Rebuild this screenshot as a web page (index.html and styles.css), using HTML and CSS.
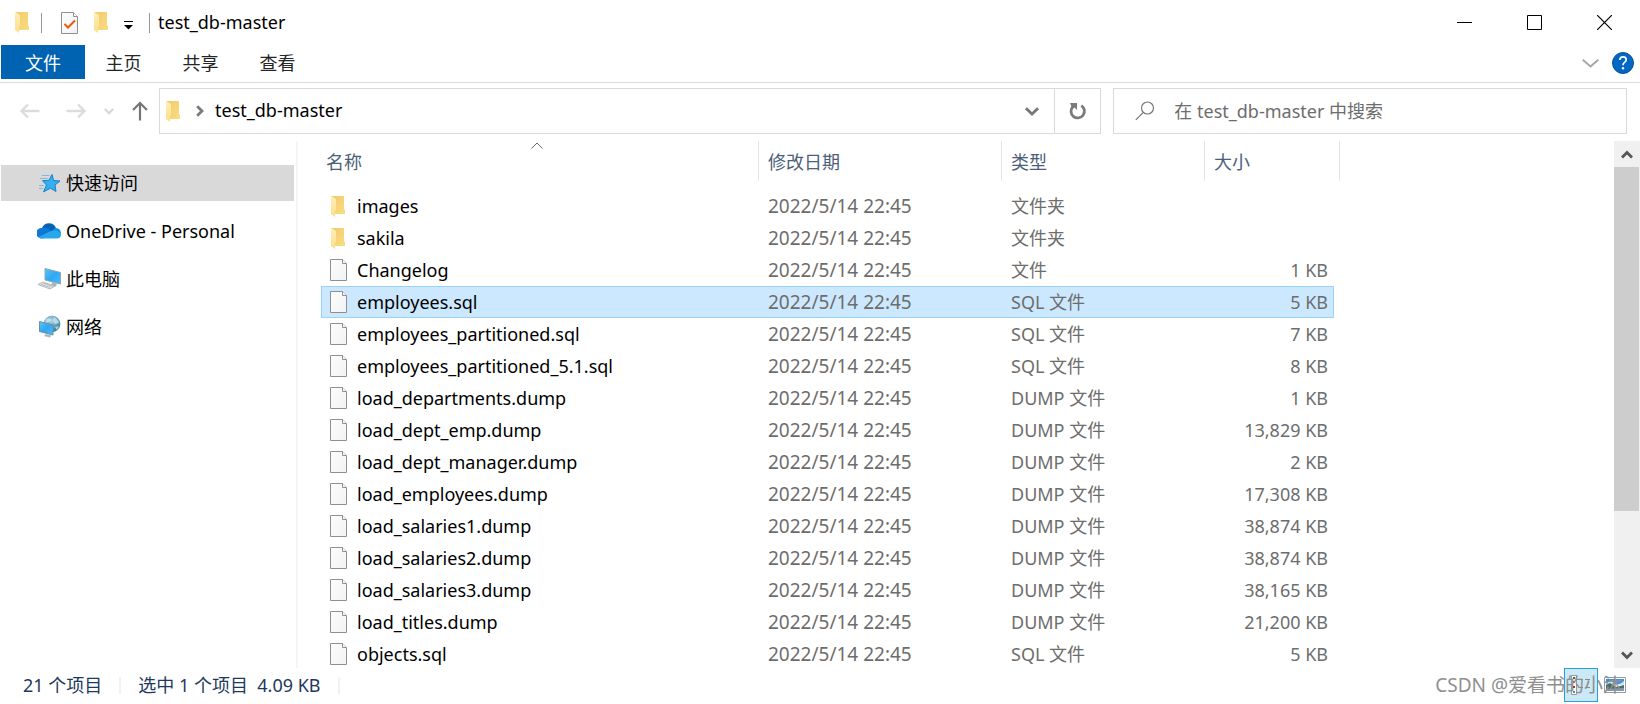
FILE: index.html
```html
<!DOCTYPE html>
<html lang="zh-CN">
<head>
<meta charset="utf-8">
<title>test_db-master</title>
<link rel="stylesheet" href="styles.css">
</head>
<body>
<svg class="defs" aria-hidden="true">
  <defs>
    <linearGradient id="folder-back" x1="0" x2="1" y1="0" y2="1"><stop offset="0" stop-color="#f0cb6c"/><stop offset="1" stop-color="#fbdc82"/></linearGradient>
    <linearGradient id="folder-front" x1="0" x2="0" y1="0" y2="1"><stop offset="0" stop-color="#ffeeb5"/><stop offset="1" stop-color="#fddf8d"/></linearGradient>
    <linearGradient id="page" x1="0" x2="1" y1="0" y2="1"><stop offset="0" stop-color="#fdfdfd"/><stop offset="1" stop-color="#f0f2f4"/></linearGradient>
    <linearGradient id="screen" x1="0" x2="1" y1="0" y2="1"><stop offset="0" stop-color="#5cc4fa"/><stop offset="0.5" stop-color="#2ea8f2"/><stop offset="1" stop-color="#4dbcff"/></linearGradient>
    <radialGradient id="globe" cx="0.45" cy="0.3" r="0.8"><stop offset="0" stop-color="#b5d9e8"/><stop offset="0.5" stop-color="#5d9dbb"/><stop offset="1" stop-color="#2b6c90"/></radialGradient>
    <symbol id="folder" viewBox="0 0 14 21"><path d="M1 0H13V13L14 14V18H4L1 16Z" fill="url(#folder-back)"/><path d="M0 0L5 3V14L4 15V21L0 18Z" fill="url(#folder-front)"/></symbol>
    <symbol id="file" viewBox="0 0 17 22"><path d="M.5 .5H12.500L16.500 4.500V21.500H.5Z" fill="url(#page)" stroke="#8f8f8f"/><path d="M12.500 .5V4.500H16.500" fill="#fff" stroke="#8f8f8f"/></symbol>
  </defs>
</svg>
<div class="window">
  <header class="titlebar">
    <svg class="folder"><use href="#folder"/></svg>
    <span class="title-sep"></span>
    <div class="quick">
      <button class="bare" aria-label="属性"><svg width="17" height="22"><use href="#file"/><path d="M3.500 12L7 15.500L14 8.500" fill="none" stroke="#e8590c" stroke-width="2"/></svg></button>
      <button class="bare" aria-label="新建文件夹"><svg class="folder"><use href="#folder"/></svg></button>
      <button class="bare customize" aria-label="自定义快速访问工具栏"><svg width="10" height="9"><path d="M0 .5H9" stroke="#000"/><path d="M0 4H9L4.500 8.500Z"/></svg></button>
    </div>
    <span class="title-sep"></span>
    <h1>test_db-master</h1>
    <div class="caption">
      <button aria-label="最小化"><svg width="15" height="15"><path d="M0 7.500H15" stroke="#000"/></svg></button>
      <button aria-label="最大化"><svg width="15" height="15"><path d="M.5 .5H14.500V14.500H.5Z" fill="none" stroke="#000"/></svg></button>
      <button aria-label="关闭"><svg width="15" height="15"><path d="M0 0L15 15M15 0L0 15" stroke="#000" stroke-width="1.200"/></svg></button>
    </div>
  </header>

  <nav class="ribbon">
    <button class="tab file-tab">文件</button>
    <button class="tab">主页</button>
    <button class="tab">共享</button>
    <button class="tab">查看</button>
    <div class="ribbon-end">
      <button class="bare" aria-label="展开功能区"><svg width="17" height="9"><path d="M.7 .7L8.500 7.500L16.300 .7" fill="none" stroke="#a5a5a5" stroke-width="1.800"/></svg></button>
      <button class="bare" aria-label="帮助"><svg width="22" height="22"><circle cx="11" cy="11" r="10.500" fill="#0067c5" stroke="#0a4f94"/><path d="M7.800 8Q7.900 4.900 11.100 4.900Q14.200 4.900 14.200 7.700Q14.200 9.200 12.500 10.400Q11 11.400 11 13.300" fill="none" stroke="#fff" stroke-width="1.700"/><circle cx="11" cy="16.300" r="1.200" fill="#fff"/></svg></button>
    </div>
  </nav>

  <div class="navbar">
    <div class="nav-buttons">
      <button class="bare" aria-label="后退" disabled><svg width="20" height="16"><path d="M19.500 8H1.500M8 1.500L1.500 8L8 14.500" fill="none" stroke="#dcdcdc" stroke-width="2.400"/></svg></button>
      <button class="bare" aria-label="前进" disabled><svg width="20" height="16"><path d="M.5 8H18.500M12 1.500L18.500 8L12 14.500" fill="none" stroke="#dcdcdc" stroke-width="2.400"/></svg></button>
      <button class="bare" aria-label="最近浏览的位置"><svg width="10" height="7"><path d="M.8 1L5 5.200L9.200 1" fill="none" stroke="#d6d6d6" stroke-width="2.200"/></svg></button>
      <button class="bare" aria-label="上移"><svg width="16" height="20"><path d="M8 19.500V2M1 9L8 2L15 9" fill="none" stroke="#767676" stroke-width="2.200"/></svg></button>
    </div>
    <div class="address">
      <svg class="folder"><use href="#folder"/></svg>
      <svg class="crumb-arrow" width="8" height="12"><path d="M1.200 1.200L6 6L1.200 10.800" fill="none" stroke="#7a7a7a" stroke-width="2.800"/></svg>
      <a href="#">test_db-master</a>
      <button class="history" aria-label="以前的位置"><svg width="14" height="9"><path d="M1 1.200L7 7L13 1.200" fill="none" stroke="#777" stroke-width="2.800"/></svg></button>
      <button class="refresh" aria-label="刷新"><svg width="18" height="18"><path d="M12.300 3.600A6.700 6.700 0 1 1 4 4.500" fill="none" stroke="#7a7a7a" stroke-width="2.800"/><path d="M1 1H8V8L5.600 5.600L3.500 7Z" fill="#7a7a7a"/></svg></button>
    </div>
    <label class="search">
      <svg width="20" height="20"><circle cx="12.500" cy="7" r="6" fill="none" stroke="#777" stroke-width="1.200"/><path d="M8.300 11.300L.8 18.800" stroke="#777" stroke-width="1.200"/></svg>
      <input type="text" aria-label="搜索" placeholder="在 test_db-master 中搜索">
    </label>
  </div>

  <div class="content">
    <aside class="tree">
      <a class="node current" href="#"><svg viewBox="0 0 24 24"><path d="M15 3.500L16.600 9.500L23 10L18 14L19 20.500L13.500 17.200L6.500 20.800L9.500 14L5.500 9.700L12 9.300Z" fill="#35aef3" stroke="#1c7fc4"/><path d="M5 4.500H12.500M3 7.500H10.500M2 14.500H7M2 17.500H6" stroke="#7fb8dd"/></svg>快速访问</a>
      <a class="node" href="#"><svg viewBox="0 0 24 24"><path d="M5 9A7.500 7.500 0 0 1 19 9L15 14Z" fill="#0364b8"/><path d="M4.500 19.500A5.300 5.300 0 0 1 4.800 8.900Q8 8 11 10L17 13.500L8 19Z" fill="#0f78d4"/><path d="M14 13L18 9Q23.500 9 24 14L22 18Z" fill="#1490df"/><path d="M1.500 18L14.200 12Q17 10.800 20 12Q24 13.500 24 16Q23.500 19.500 20 19.500H5Q3 19.500 1.500 18Z" fill="#28a8ea"/></svg>OneDrive - Personal</a>
      <a class="node" href="#"><svg viewBox="0 0 24 24"><path d="M8 1.500L23.500 5.500V17L8 13Z" fill="url(#screen)" stroke="#8fa3b1"/><path d="M15.500 15L14 18L19 19.500L20 16.500Z" fill="#aab4bb"/><path d="M1 17.500L6 15L18 19.200L13 22Z" fill="#e1e5e8" stroke="#a4acb2" stroke-width=".8"/><path d="M4 17.300L13 20.400M6.500 16.200L15.500 19.400" stroke="#aab2b8" stroke-width=".8"/></svg>此电脑</a>
      <a class="node" href="#"><svg viewBox="0 0 24 24"><circle cx="15" cy="9" r="8.300" fill="url(#globe)"/><path d="M9 4Q13 2 14 5Q12 8 8 8ZM17 2Q22 5 22 8L18 9L16 6ZM18 12L22 11L20 15Z" fill="#d5ebf2" opacity=".7"/><path d="M2.500 6.500L16 10V20L2.500 16.500Z" fill="url(#screen)" stroke="#6f8fa5"/><path d="M9 19L7 21L13 22.500L14 20.500Z" fill="#aab4bb"/></svg>网络</a>
    </aside>

    <main class="files">
      <table>
        <colgroup><col class="c-name"><col class="c-date"><col class="c-type"><col class="c-size"><col class="c-end"></colgroup>
        <thead>
          <tr>
            <th scope="col"><div>名称<svg class="sort" width="12" height="7"><path d="M.5 6.500L6 1L11.500 6.500" fill="none" stroke="#6a6a6a"/></svg></div></th>
            <th scope="col"><div>修改日期</div></th>
            <th scope="col"><div>类型</div></th>
            <th scope="col" colspan="2"><div>大小</div></th>
          </tr>
        </thead>
        <tbody>
          <tr><td><span class="name"><svg class="folder"><use href="#folder"/></svg>images</span></td><td>2022/5/14 22:45</td><td>文件夹</td><td></td></tr>
          <tr><td><span class="name"><svg class="folder"><use href="#folder"/></svg>sakila</span></td><td>2022/5/14 22:45</td><td>文件夹</td><td></td></tr>
          <tr><td><span class="name"><svg class="file"><use href="#file"/></svg>Changelog</span></td><td>2022/5/14 22:45</td><td>文件</td><td>1 KB</td></tr>
          <tr class="selected"><td><span class="name"><svg class="file"><use href="#file"/></svg>employees.sql</span></td><td>2022/5/14 22:45</td><td>SQL 文件</td><td>5 KB</td></tr>
          <tr><td><span class="name"><svg class="file"><use href="#file"/></svg>employees_partitioned.sql</span></td><td>2022/5/14 22:45</td><td>SQL 文件</td><td>7 KB</td></tr>
          <tr><td><span class="name"><svg class="file"><use href="#file"/></svg>employees_partitioned_5.1.sql</span></td><td>2022/5/14 22:45</td><td>SQL 文件</td><td>8 KB</td></tr>
          <tr><td><span class="name"><svg class="file"><use href="#file"/></svg>load_departments.dump</span></td><td>2022/5/14 22:45</td><td>DUMP 文件</td><td>1 KB</td></tr>
          <tr><td><span class="name"><svg class="file"><use href="#file"/></svg>load_dept_emp.dump</span></td><td>2022/5/14 22:45</td><td>DUMP 文件</td><td>13,829 KB</td></tr>
          <tr><td><span class="name"><svg class="file"><use href="#file"/></svg>load_dept_manager.dump</span></td><td>2022/5/14 22:45</td><td>DUMP 文件</td><td>2 KB</td></tr>
          <tr><td><span class="name"><svg class="file"><use href="#file"/></svg>load_employees.dump</span></td><td>2022/5/14 22:45</td><td>DUMP 文件</td><td>17,308 KB</td></tr>
          <tr><td><span class="name"><svg class="file"><use href="#file"/></svg>load_salaries1.dump</span></td><td>2022/5/14 22:45</td><td>DUMP 文件</td><td>38,874 KB</td></tr>
          <tr><td><span class="name"><svg class="file"><use href="#file"/></svg>load_salaries2.dump</span></td><td>2022/5/14 22:45</td><td>DUMP 文件</td><td>38,874 KB</td></tr>
          <tr><td><span class="name"><svg class="file"><use href="#file"/></svg>load_salaries3.dump</span></td><td>2022/5/14 22:45</td><td>DUMP 文件</td><td>38,165 KB</td></tr>
          <tr><td><span class="name"><svg class="file"><use href="#file"/></svg>load_titles.dump</span></td><td>2022/5/14 22:45</td><td>DUMP 文件</td><td>21,200 KB</td></tr>
          <tr><td><span class="name"><svg class="file"><use href="#file"/></svg>objects.sql</span></td><td>2022/5/14 22:45</td><td>SQL 文件</td><td>5 KB</td></tr>
        </tbody>
      </table>
    </main>

    <div class="scrollbar">
      <button aria-label="向上滚动"><svg width="12" height="9"><path d="M1 7.500L6 2.500L11 7.500" fill="none" stroke="#555" stroke-width="2.800"/></svg></button>
      <div class="track"><div class="thumb"></div></div>
      <button aria-label="向下滚动"><svg width="12" height="9"><path d="M1 1.500L6 6.500L11 1.500" fill="none" stroke="#555" stroke-width="2.800"/></svg></button>
    </div>
  </div>

  <footer class="status">
    <span>21 个项目</span>
    <span class="status-sep"></span>
    <span>选中 1 个项目&nbsp; 4.09 KB</span>
    <span class="status-sep"></span>
    <div class="views">
      <button class="view active" aria-label="详细信息"><svg width="22" height="20"><path d="M1.500 .5H6.500V19.500H1.500Z" fill="#fff" stroke="#999"/><path d="M3 3H5" stroke="#555" stroke-width="2"/><path d="M3 7H5" stroke="#b33" stroke-width="2"/><path d="M3 12H5" stroke="#c22" stroke-width="2"/><path d="M3 17H5" stroke="#595" stroke-width="2"/><path d="M9 4.500H13M15 4.500H20M9 12.500H13M15 12.500H20" stroke="#888"/></svg></button>
      <button class="view" aria-label="大图标"><svg width="22" height="16"><path d="M.5 .5H21.500V15.500H.5Z" fill="#fff" stroke="#999"/><path d="M2 2H20V8H2Z" fill="#3f8fe0"/><path d="M2 6Q7 3 11 6T20 4V8H2Z" fill="#c9e3f6"/><path d="M2 8L6 6L12 10L20 8V14H2Z" fill="#4a6f62"/><path d="M2 12L20 11V14H2Z" fill="#7f9cb2"/></svg></button>
    </div>
    <span class="watermark">CSDN @爱看书的小沐</span>
  </footer>
</div>
</body>
</html>
```
FILE: styles.css
```css
* { box-sizing: border-box; }

body {
  margin: 0;
  background: #fff;
  color: #000;
  font: 18px/24px "Noto Sans", "Noto Sans CJK SC", sans-serif;
}

svg { display: block; flex: none; }
button, input { font: inherit; color: inherit; }
button { border: 0; padding: 0; background: none; }
a { color: inherit; text-decoration: none; }

.defs { position: absolute; width: 0; height: 0; }
.folder { width: 14px; height: 21px; }
.file { width: 17px; height: 22px; }
.bare { display: flex; align-items: center; justify-content: center; }

.window {
  display: flex;
  flex-direction: column;
  height: 100vh;
  overflow: hidden;
}

/* Title bar */
.titlebar {
  display: flex;
  align-items: center;
  height: 45px;
  padding-left: 15px;
}
.title-sep { width: 1px; height: 20px; margin-left: 12px; background: #999; }
.quick { display: flex; align-items: center; gap: 16px; margin-left: 19px; }
.quick + .title-sep { margin-left: 15px; }
.customize { padding-top: 5px; }
h1 { margin: 0 0 0 8px; padding-bottom: 2px; font-size: 18px; font-weight: 400; }
.caption { display: flex; align-self: stretch; margin-left: auto; padding-right: 1px; }
.caption button {
  display: flex;
  align-items: center;
  justify-content: center;
  width: 70px;
}

/* Ribbon tabs */
.ribbon {
  display: flex;
  align-items: flex-start;
  height: 38px;
  padding-left: 1px;
  border-bottom: 1px solid #dadbdc;
}
.tab { width: 77px; height: 34px; padding-top: 2px; color: #262626; }
.file-tab { width: 84px; background: #0063b1; color: #fff; }
.ribbon-end {
  display: flex;
  align-items: center;
  gap: 13px;
  height: 36px;
  margin-left: auto;
  padding-right: 6px;
}

/* Navigation row */
.navbar {
  display: flex;
  align-items: stretch;
  height: 46px;
  margin: 5px 13px 0 0;
}
.nav-buttons { display: flex; align-items: center; width: 159px; padding-left: 20px; }
.nav-buttons .bare + .bare { margin-left: 26px; }
.nav-buttons .bare:nth-child(n + 3) { margin-left: 18px; }
.address {
  display: flex;
  flex: 935 1 0;
  align-items: center;
  border: 1px solid #d9d9d9;
  padding-left: 6px;
}
.address a { padding-bottom: 2px; }
.crumb-arrow { margin: 0 11px 0 16px; }
.history { display: flex; align-items: center; justify-content: center; width: 44px; height: 44px; margin-left: auto; }
.refresh {
  display: flex;
  align-items: center;
  justify-content: center;
  width: 46px;
  align-self: stretch;
  border-left: 1px solid #d9d9d9;
}
.search {
  display: flex;
  flex: 491 1 0;
  align-items: center;
  gap: 19px;
  margin-left: 12px;
  padding-left: 21px;
  border: 1px solid #d9d9d9;
}
.search input { flex: 1; min-width: 0; border: 0; padding: 0; outline: 0; background: none; }
.search input::placeholder { color: #6d6d6d; opacity: 1; }

/* Body */
.content { display: flex; flex: 1; min-height: 0; margin-top: 7px; }
.tree {
  display: flex;
  flex-direction: column;
  gap: 12px;
  width: 298px;
  padding: 24px 2px 0 1px;
  border-right: 2px solid #f5f5f5;
}
.node {
  display: flex;
  align-items: center;
  gap: 5px;
  height: 36px;
  padding-left: 36px;
}
.node svg { width: 24px; height: 24px; }
.current { background: #d9d9d9; }

.files { flex: 1; min-width: 0; padding-left: 23px; overflow: hidden; }
table { table-layout: fixed; width: 1019px; border-spacing: 0; }
.c-name { width: 438px; }
.c-date { width: 243px; }
.c-type { width: 203px; }
.c-size { width: 129px; }
.c-end { width: 6px; }
th {
  padding: 0 0 9px;
  font-weight: 400;
  text-align: left;
  color: #4c607a;
}
th div {
  position: relative;
  height: 40px;
  padding-left: 9px;
  border-right: 1px solid #e5e5e5;
  line-height: 42px;
}
th:first-child div { padding-left: 5px; }
.sort { position: absolute; top: 1px; left: 210px; }
td {
  height: 32px;
  padding: 0 0 0 9px;
  border: solid transparent;
  border-width: 1px 0;
  color: #6d6d6d;
  white-space: nowrap;
}
td:first-child { border-left-width: 1px; padding-left: 8px; color: #000; }
td:nth-child(2) { font-size: 19px; }
td:nth-child(4) { border-right-width: 1px; padding-right: 5px; text-align: right; }
.name { display: flex; align-items: center; gap: 10px; }
.name .folder { margin: 0 2px 0 1px; }
.selected td { background: #cce8ff; border-color: #99d1ff; }

/* Scroll bar */
.scrollbar { display: flex; flex-direction: column; width: 26px; background: #f0f0f0; }
.scrollbar button { display: flex; align-items: center; justify-content: center; height: 26px; }
.track { flex: 1; }
.thumb { height: 72.5%; margin-right: 1px; background: #cdcdcd; }

/* Status bar */
.status {
  position: relative;
  display: flex;
  align-items: center;
  height: 36px;
  padding: 0 0 2px 23px;
  color: #1e395b;
}
.status-sep { width: 2px; height: 17px; margin: 0 17px; background: #f2f2f2; }
.views { display: flex; align-items: center; align-self: stretch; margin-left: auto; padding-right: 8px; }
.view { display: flex; align-items: center; justify-content: center; width: 34px; height: 34px; border: 1px solid transparent; }
.active { border-color: #26a0da; background: #cbe8f6; }
.watermark {
  position: absolute;
  right: 18px;
  top: 5px;
  color: #8f8f8f;
  font-size: 19px;
}
```
